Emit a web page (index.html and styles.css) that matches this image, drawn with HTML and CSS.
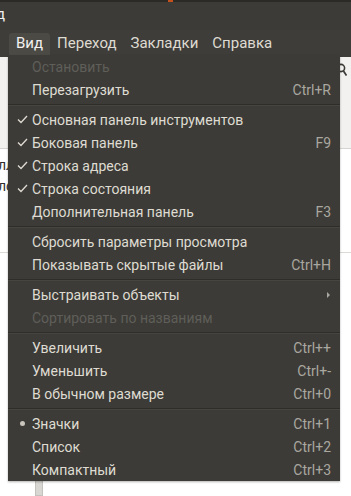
FILE: index.html
```html
<!DOCTYPE html>
<html lang="ru">
<head>
    <meta charset="UTF-8">
    <title>Вид</title>
    <link rel="stylesheet" href="styles.css">
</head>
<body>
    <div class="topline"><span class="dot"></span></div>
    <div class="titlebar"><span class="title">д</span></div>
    <div class="menubar">
        <span class="tab active">Вид</span>
        <span class="tab">Переход</span>
        <span class="tab">Закладки</span>
        <span class="tab">Справка</span>
    </div>
    <div class="window">
        <div class="toolbar">
            <svg class="search" width="10" height="14" viewBox="0 0 10 14">
                <circle cx="4" cy="5" r="3.6" fill="none" stroke="#3c3b37" stroke-width="1.6"/>
                <path d="M6.5 8 L9.5 12.5" stroke="#3c3b37" stroke-width="1.8"/>
            </svg>
        </div>
        <div class="files">
            <div class="name">лл</div>
            <div class="name">лс</div>
        </div>
        <div class="lower">
            <div class="scroll"></div>
        </div>
    </div>

    <div class="menu">
        <div class="item disabled"><span class="mark"></span><span class="label">Остановить</span></div>
        <div class="item"><span class="mark"></span><span class="label">Перезагрузить</span><span class="key">Ctrl+R</span></div>
        <div class="sep"></div>
        <div class="item"><span class="mark"><svg width="11" height="9" viewBox="0 0 11 9"><path d="M1 4.5 L4 7.5 L10 1" fill="none" stroke="#dfdbd2" stroke-width="1.3"/></svg></span><span class="label">Основная панель инструментов</span></div>
        <div class="item"><span class="mark"><svg width="11" height="9" viewBox="0 0 11 9"><path d="M1 4.5 L4 7.5 L10 1" fill="none" stroke="#dfdbd2" stroke-width="1.3"/></svg></span><span class="label">Боковая панель</span><span class="key">F9</span></div>
        <div class="item"><span class="mark"><svg width="11" height="9" viewBox="0 0 11 9"><path d="M1 4.5 L4 7.5 L10 1" fill="none" stroke="#dfdbd2" stroke-width="1.3"/></svg></span><span class="label">Строка адреса</span></div>
        <div class="item"><span class="mark"><svg width="11" height="9" viewBox="0 0 11 9"><path d="M1 4.5 L4 7.5 L10 1" fill="none" stroke="#dfdbd2" stroke-width="1.3"/></svg></span><span class="label">Строка состояния</span></div>
        <div class="item"><span class="mark"></span><span class="label">Дополнительная панель</span><span class="key">F3</span></div>
        <div class="sep"></div>
        <div class="item"><span class="mark"></span><span class="label">Сбросить параметры просмотра</span></div>
        <div class="item"><span class="mark"></span><span class="label">Показывать скрытые файлы</span><span class="key">Ctrl+H</span></div>
        <div class="sep"></div>
        <div class="item"><span class="mark"></span><span class="label">Выстраивать объекты</span><span class="arrow"></span></div>
        <div class="item disabled"><span class="mark"></span><span class="label">Сортировать по названиям</span></div>
        <div class="sep"></div>
        <div class="item"><span class="mark"></span><span class="label">Увеличить</span><span class="key">Ctrl++</span></div>
        <div class="item"><span class="mark"></span><span class="label">Уменьшить</span><span class="key">Ctrl+-</span></div>
        <div class="item"><span class="mark"></span><span class="label">В обычном размере</span><span class="key">Ctrl+0</span></div>
        <div class="sep"></div>
        <div class="item"><span class="mark"><span class="bullet"></span></span><span class="label">Значки</span><span class="key">Ctrl+1</span></div>
        <div class="item"><span class="mark"></span><span class="label">Список</span><span class="key">Ctrl+2</span></div>
        <div class="item"><span class="mark"></span><span class="label">Компактный</span><span class="key">Ctrl+3</span></div>
    </div>
</body>
</html>
```

FILE: styles.css
```css
*{
    margin: 0;
    padding: 0;
    box-sizing: border-box;
}
body {
    width: 351px;
    height: 496px;
    overflow: hidden;
    position: relative;
    background-color: #ffffff;
    font-family: Roboto, 'Open Sans', sans-serif;
    font-size: 14px;
}
.topline {
    height: 2px;
    background-color: #2b2a27;
    position: relative;
}
.dot {
    position: absolute;
    left: 168px;
    top: 0;
    width: 5px;
    height: 2px;
    background-color: #c4501c;
}
.titlebar {
    height: 28px;
    background-color: #3c3b37;
    color: #f2f1f0;
    display: flex;
    align-items: center;
    overflow: hidden;
}
.title {
    margin-left: -4px;
    margin-top: -4px;
    font-size: 15px;
}
.menubar {
    height: 27px;
    background-color: #3e3d39;
    display: flex;
    align-items: flex-end;
    padding-left: 9px;
}
.tab {
    height: 24px;
    line-height: 21px;
    padding: 0 7px;
    color: #dfdbd2;
    font-size: 15px;
    border-radius: 3px 3px 0 0;
}
.tab.active {
    background-color: #4b4a45;
    color: #f2f1f0;
}
.window {
    height: 439px;
    display: flex;
    flex-direction: column;
}
.toolbar {
    height: 92px;
    background-color: #f2f1f0;
    border-bottom: 1px solid #d6d4d0;
    display: flex;
    justify-content: flex-end;
    padding: 6px 4px 0 0;
}
.files {
    height: 104px;
    padding-top: 8px;
    border-bottom: 1px solid #dcdad5;
}
.name {
    height: 21px;
    margin-left: -2px;
    color: #2e2e2e;
    font-size: 14px;
}
.lower {
    flex: 1;
    position: relative;
}
.scroll {
    position: absolute;
    left: 35px;
    bottom: 0;
    width: 8px;
    height: 20px;
    background-color: #d9d7d3;
    border: 1px solid #c4c2bd;
}
.menu {
    position: absolute;
    left: 8px;
    top: 55px;
    width: 332px;
    background-color: #3c3b37;
    color: #dfdbd2;
    box-shadow: 0 1px 2px rgba(0, 0, 0, 0.3);
}
.item {
    height: 23px;
    display: flex;
    align-items: center;
    padding-right: 9px;
}
.item.disabled {
    color: #5f5e59;
}
.mark {
    width: 24px;
    height: 23px;
    display: flex;
    align-items: center;
    padding-left: 9px;
}
.bullet {
    width: 5px;
    height: 5px;
    margin-left: 3px;
    border-radius: 50%;
    background-color: #c9c5bc;
}
.label {
    flex: 1;
}
.key {
    color: #aaa7a0;
}
.arrow {
    width: 0;
    height: 0;
    border-left: 3px solid #aaa7a0;
    border-top: 3px solid transparent;
    border-bottom: 3px solid transparent;
    margin-right: 1px;
}
.sep {
    height: 7px;
    padding-top: 3px;
}
.sep::before {
    content: "";
    display: block;
    height: 1px;
    background-color: #2e2d2a;
    border-bottom: 1px solid #46453f;
}
```
